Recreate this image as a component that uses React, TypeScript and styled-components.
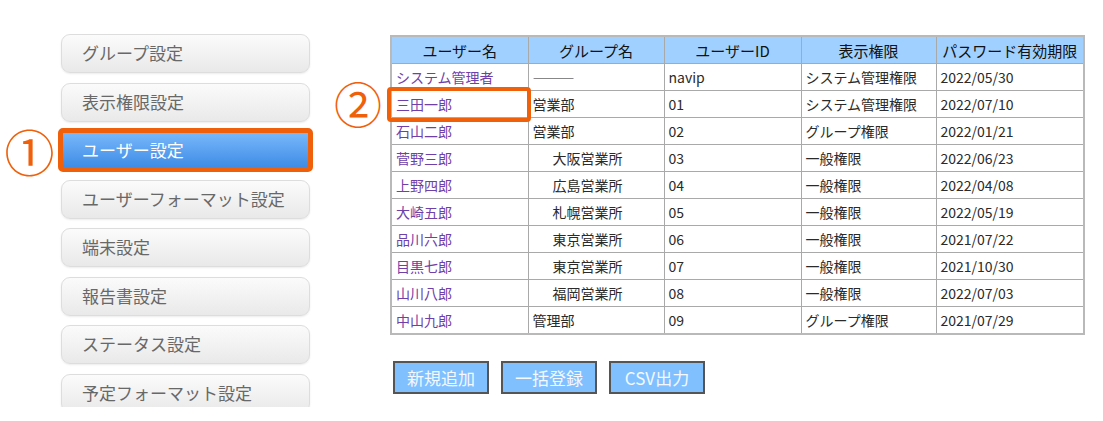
import * as React from "react"
import styled, { createGlobalStyle } from "styled-components"

const GlobalStyle = createGlobalStyle`
  html, body {
    margin: 0;
    padding: 0;
    background: #ffffff;
    font-family: "Noto Sans CJK JP", "Noto Sans", sans-serif;
  }
`

const ORANGE = "#f0600a"

const menuItems = [
  "グループ設定",
  "表示権限設定",
  "ユーザー設定",
  "ユーザーフォーマット設定",
  "端末設定",
  "報告書設定",
  "ステータス設定",
  "予定フォーマット設定"
]

type UserRow = {
  name: string
  group: string
  indent?: boolean
  id: string
  role: string
  expires: string
}

const users: UserRow[] = [
  { name: "システム管理者", group: "―――", id: "navip", role: "システム管理権限", expires: "2022/05/30" },
  { name: "三田一郎", group: "営業部", id: "01", role: "システム管理権限", expires: "2022/07/10" },
  { name: "石山二郎", group: "営業部", id: "02", role: "グループ権限", expires: "2022/01/21" },
  { name: "菅野三郎", group: "大阪営業所", indent: true, id: "03", role: "一般権限", expires: "2022/06/23" },
  { name: "上野四郎", group: "広島営業所", indent: true, id: "04", role: "一般権限", expires: "2022/04/08" },
  { name: "大崎五郎", group: "札幌営業所", indent: true, id: "05", role: "一般権限", expires: "2022/05/19" },
  { name: "品川六郎", group: "東京営業所", indent: true, id: "06", role: "一般権限", expires: "2021/07/22" },
  { name: "目黒七郎", group: "東京営業所", indent: true, id: "07", role: "一般権限", expires: "2021/10/30" },
  { name: "山川八郎", group: "福岡営業所", indent: true, id: "08", role: "一般権限", expires: "2022/07/03" },
  { name: "中山九郎", group: "管理部", id: "09", role: "グループ権限", expires: "2021/07/29" }
]

const columns = [
  { label: "ユーザー名", width: 137 },
  { label: "グループ名", width: 136 },
  { label: "ユーザーID", width: 137 },
  { label: "表示権限", width: 135 },
  { label: "パスワード有効期限", width: 148 }
]

const App: React.FC = () => {
  return (
    <>
      <GlobalStyle />
      <Page>
        <Menu>
          {menuItems.map((label, i) => {
            const selected = i === 2
            return (
              <MenuRow key={label}>
                <Marker>{selected ? "①" : ""}</Marker>
                <MenuButton $selected={selected}>{label}</MenuButton>
              </MenuRow>
            )
          })}
        </Menu>

        <Content>
          <TableWrap>
            <Table>
              <colgroup>
                {columns.map(c => (
                  <col key={c.label} style={{ width: c.width }} />
                ))}
              </colgroup>
              <thead>
                <tr>
                  {columns.map(c => (
                    <Th key={c.label}>{c.label}</Th>
                  ))}
                </tr>
              </thead>
              <tbody>
                {users.map(u => (
                  <tr key={u.id}>
                    <NameCell>{u.name}</NameCell>
                    <Td $indent={u.indent}>{u.group}</Td>
                    <Td>{u.id}</Td>
                    <Td>{u.role}</Td>
                    <Td>{u.expires}</Td>
                  </tr>
                ))}
              </tbody>
            </Table>
            <TableMarker>②</TableMarker>
            <Highlight />
          </TableWrap>

          <Actions>
            <ActionButton>新規追加</ActionButton>
            <ActionButton>一括登録</ActionButton>
            <ActionButton>CSV出力</ActionButton>
          </Actions>
        </Content>
      </Page>
    </>
  )
}

const Page = styled.div`
  display: flex;
  align-items: flex-start;
  width: 1103px;
  height: 421px;
  padding-top: 34px;
  box-sizing: border-box;
  overflow: hidden;
`

const Menu = styled.div`
  display: flex;
  flex-direction: column;
  gap: 9.5px;
  width: 330px;
  height: 373px;
  overflow: hidden;
  flex-shrink: 0;
`

const MenuRow = styled.div`
  display: flex;
  align-items: center;
`

const Marker = styled.div`
  width: 61px;
  flex-shrink: 0;
  display: flex;
  justify-content: center;
  padding-right: 2px;
  box-sizing: border-box;
  color: ${ORANGE};
  font-size: 50px;
  line-height: 39px;
`

const MenuButton = styled.div<{ $selected?: boolean }>`
  display: flex;
  align-items: center;
  box-sizing: border-box;
  font-size: 17px;
  flex-shrink: 0;
  padding-bottom: 2px;
  ${p =>
    p.$selected
      ? `
    width: 255px;
    height: 44px;
    margin: -3px -3px -2px -3px;
    padding-left: 19px;
    border: 5px solid ${ORANGE};
    border-radius: 5px;
    background: linear-gradient(#78b8fa, #3f8ce6);
    color: #ffffff;
  `
      : `
    width: 249px;
    height: 39px;
    padding-left: 20px;
    border: 1px solid #dddddd;
    border-radius: 9px;
    background: linear-gradient(#fbfbfb, #e9e9e9);
    box-shadow: 0 1px 2px rgba(0, 0, 0, 0.08);
    color: #686868;
  `}
`

const Content = styled.div`
  display: flex;
  flex-direction: column;
  margin-left: 60px;
  margin-top: 1px;
`

const TableWrap = styled.div`
  position: relative;
`

const Table = styled.table`
  border-collapse: collapse;
  table-layout: fixed;
  width: 693px;
  border: 2px solid #b9b9b9;
  font-size: 14px;
`

const Th = styled.th`
  height: 26px;
  padding: 0;
  background: #9fd0ff;
  border: 1px solid #a9a9a9;
  color: #111111;
  font-size: 15px;
  font-weight: normal;
  text-align: center;
`

const Td = styled.td<{ $indent?: boolean }>`
  height: 26px;
  padding: 0 0 0 ${p => (p.$indent ? 24 : 4)}px;
  border: 1px solid #a9a9a9;
  color: #2a2a2a;
  white-space: nowrap;
`

const NameCell = styled(Td)`
  color: #7040a8;
`

const TableMarker = styled.div`
  position: absolute;
  left: -56px;
  top: 45px;
  color: ${ORANGE};
  font-size: 48px;
  line-height: 44px;
`

const Highlight = styled.div`
  position: absolute;
  left: -3px;
  top: 52px;
  width: 144px;
  height: 35px;
  box-sizing: border-box;
  border: 4px solid ${ORANGE};
  border-radius: 4px;
`

const Actions = styled.div`
  display: flex;
  gap: 12px;
  margin-top: 26px;
  margin-left: 3px;
`

const ActionButton = styled.div`
  width: 96px;
  height: 33px;
  box-sizing: border-box;
  display: flex;
  align-items: center;
  justify-content: center;
  background: #80c0ff;
  border: 2px solid #555555;
  color: #f4f8ff;
  font-size: 17px;
`

export default App
